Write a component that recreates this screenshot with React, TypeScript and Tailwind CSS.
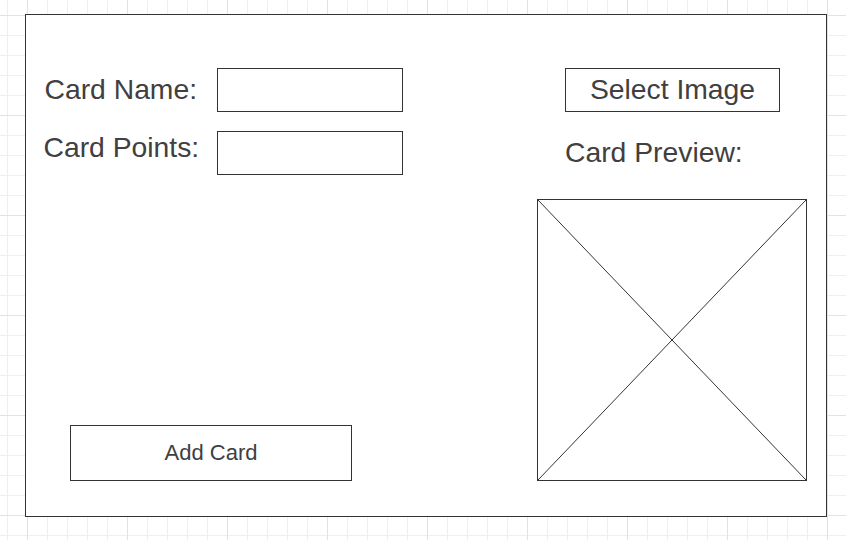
import React from 'react'

function Field({ label, labelClass }: { label: string; labelClass: string }) {
  return (
    <div className="flex items-start">
      <span className={`text-[28.3px] leading-[32px] whitespace-nowrap ${labelClass}`}>{label}</span>
      <div className="w-[186px] h-[44px] border border-[#333333] bg-white" />
    </div>
  )
}

function App() {
  return (
    <div
      className="w-[846px] h-[540px] overflow-hidden bg-white bg-[linear-gradient(to_right,#e2e2e2_1px,transparent_1px),linear-gradient(to_bottom,#e2e2e2_1px,transparent_1px),linear-gradient(to_right,#efefef_1px,transparent_1px),linear-gradient(to_bottom,#efefef_1px,transparent_1px)] bg-[size:100px_100px,100px_100px,20px_20px,20px_20px] bg-[position:27px_15px,27px_15px,7px_15px,7px_15px] pt-[14px] pl-[25px] text-[#404040]"
      style={{ fontFamily: '"Liberation Sans", Arial, sans-serif' }}
    >
      {/* Main frame */}
      <div className="w-[802px] h-[503px] border border-[#333333] bg-white flex">
        {/* Left column */}
        <div className="flex-1 flex flex-col pt-[53px] pb-[35px]">
          <div className="flex flex-col gap-[19px]">
            <Field label="Card Name:" labelClass="ml-[18.5px] w-[172.5px] mt-[5px]" />
            <Field label="Card Points:" labelClass="ml-[17.5px] w-[173.5px] mt-0" />
          </div>
          <button className="mt-auto ml-[44px] w-[282px] h-[56px] border border-[#333333] bg-white text-[22px] leading-none flex items-center justify-center">
            Add Card
          </button>
        </div>

        {/* Right column */}
        <div className="w-[270px] mr-[19px] flex flex-col pt-[53px]">
          <button className="ml-[28px] w-[215px] h-[44px] pb-[2px] border border-[#333333] bg-white text-[28.3px] leading-none flex items-center justify-center">
            Select Image
          </button>
          <span className="ml-[28px] mt-[24px] text-[28.3px] leading-[32px] whitespace-nowrap">Card Preview:</span>
          <div className="mt-[31px] w-[270px] h-[282px] border border-[#333333] bg-white">
            <svg className="block w-full h-full" viewBox="0 0 268 280" preserveAspectRatio="none">
              <line x1="0" y1="0" x2="268" y2="280" stroke="#333333" strokeWidth="1" />
              <line x1="268" y1="0" x2="0" y2="280" stroke="#333333" strokeWidth="1" />
            </svg>
          </div>
        </div>
      </div>
    </div>
  )
}

export default App
